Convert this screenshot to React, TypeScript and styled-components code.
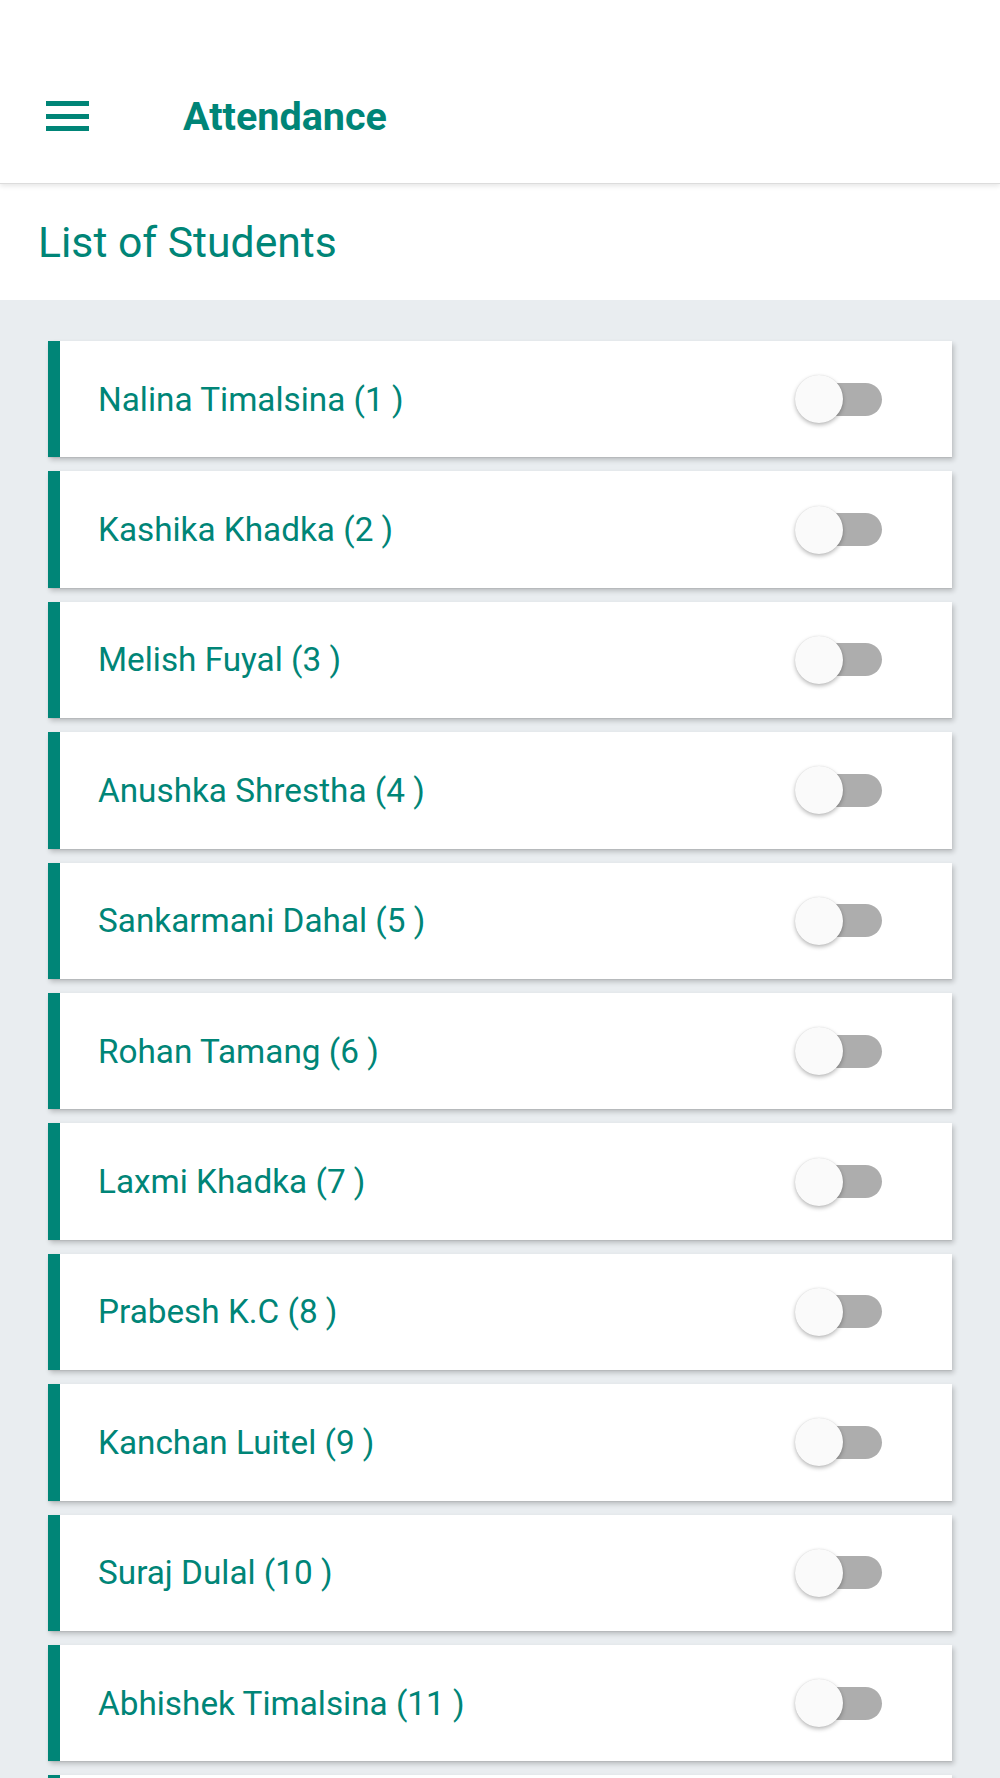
import React from "react";
import styled, { createGlobalStyle } from "styled-components";

const TEAL = "#008577";

const Global = createGlobalStyle`
  html, body { margin: 0; padding: 0; background: #e9edf0; }
  body { font-family: Roboto, "Noto Sans", "Liberation Sans", sans-serif; }
  * { box-sizing: border-box; }
`;

const Page = styled.div`
  height: 1778px;
  background: #e9edf0;
  overflow: hidden;
`;

const Toolbar = styled.header`
  position: relative;
  z-index: 2;
  height: 184px;
  padding-top: 49px;
  display: flex;
  align-items: center;
  background: #ffffff;
  border-bottom: 1px solid #dcdcdc;
  box-shadow: 0 2px 5px rgba(0, 0, 0, 0.1);
`;

const MenuButton = styled.div`
  width: 43px;
  height: 30px;
  margin-left: 46px;
  display: flex;
  flex-direction: column;
  justify-content: space-between;
`;

const MenuBar = styled.span`
  display: block;
  height: 5px;
  background: ${TEAL};
`;

const Title = styled.h1`
  margin: 0 0 0 94px;
  font-size: 39.5px;
  font-weight: 700;
  color: ${TEAL};
`;

const SectionHead = styled.div`
  height: 116px;
  background: #ffffff;
  display: flex;
  align-items: center;
  padding-left: 38px;
`;

const SectionTitle = styled.h2`
  margin: 0;
  font-size: 42.7px;
  font-weight: 400;
  color: ${TEAL};
`;

const List = styled.div`
  display: flex;
  flex-direction: column;
  gap: 14px;
  padding: 41px 48px 0 48px;
`;

const Card = styled.div`
  height: 116.4px;
  flex-shrink: 0;
  display: flex;
  align-items: center;
  justify-content: space-between;
  background: #ffffff;
  border-left: 12px solid ${TEAL};
  padding: 0 70px 0 38px;
  box-shadow: 2px 3px 5px rgba(0, 0, 0, 0.2), 0 1px 1px rgba(0, 0, 0, 0.06);
`;

const Name = styled.span`
  font-size: 33.3px;
  font-weight: 400;
  color: ${TEAL};
`;

const Switch = styled.div`
  position: relative;
  width: 87px;
  height: 48px;
`;

const Track = styled.span`
  position: absolute;
  right: 0;
  top: 7.5px;
  width: 83px;
  height: 33px;
  border-radius: 17px;
  background: #adadad;
`;

const Thumb = styled.span`
  position: absolute;
  left: 0;
  top: 0;
  width: 48px;
  height: 48px;
  border-radius: 50%;
  background: #fafafa;
  box-shadow: 0 2px 4px rgba(0, 0, 0, 0.28), 0 0 1px rgba(0, 0, 0, 0.12);
`;

const students = [
  "Nalina Timalsina",
  "Kashika Khadka",
  "Melish Fuyal",
  "Anushka Shrestha",
  "Sankarmani Dahal",
  "Rohan Tamang",
  "Laxmi Khadka",
  "Prabesh K.C",
  "Kanchan Luitel",
  "Suraj Dulal",
  "Abhishek Timalsina",
];

export default function App() {
  return (
    <Page>
      <Global />
      <Toolbar>
        <MenuButton>
          <MenuBar />
          <MenuBar />
          <MenuBar />
        </MenuButton>
        <Title>Attendance</Title>
      </Toolbar>
      <SectionHead>
        <SectionTitle>List of Students</SectionTitle>
      </SectionHead>
      <List>
        {students.map((s, i) => (
          <Card key={s}>
            <Name>
              {s} ({i + 1} )
            </Name>
            <Switch>
              <Track />
              <Thumb />
            </Switch>
          </Card>
        ))}
        <Card aria-hidden="true" />
      </List>
    </Page>
  );
}
